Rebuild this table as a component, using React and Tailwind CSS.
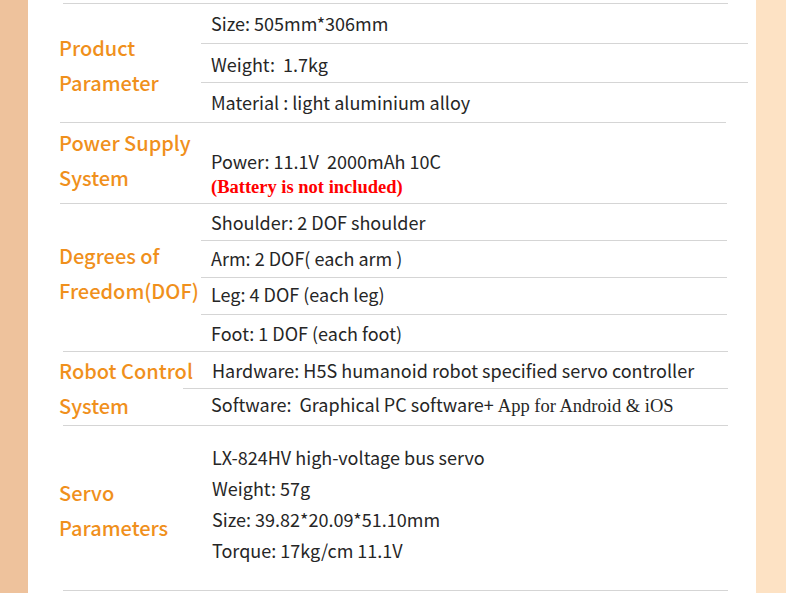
import React from "react";

const Line = ({ cls }) => <div className={"h-px bg-[#d5d5d5] " + cls} />;

const Label = ({ lines, cls = "" }) => (
  <div className={"w-[173px] shrink-0 pl-[31px] flex flex-col justify-center " + cls}>
    {lines.map((l) => (
      <div key={l} className="text-[20px] leading-[35px] font-medium text-[#f0901c] whitespace-nowrap">
        {l}
      </div>
    ))}
  </div>
);

export default function App() {
  return (
    <div
      className="flex w-[786px] h-[593px] overflow-hidden text-[#262626]"
      style={{ fontFamily: '"Noto Sans CJK SC", "Noto Sans", sans-serif' }}
    >
      <div className="w-[28px] shrink-0 bg-[#eec29c]" />
      <div className="w-[728px] shrink-0 bg-white flex flex-col">
        <div className="h-[3px]" />
        <Line cls="ml-[35px] w-[665px]" />

        {/* Product Parameter */}
        <div className="flex h-[118px]">
          <Label lines={["Product", "Parameter"]} cls="pt-[4px]" />
          <div className="flex flex-col w-[547px] text-[18px]">
            <div className="h-[40px] border-b border-[#d5d5d5] flex items-center pl-[10px]">Size: 505mm*306mm</div>
            <div className="h-[39px] border-b border-[#d5d5d5] flex items-center pl-[10px] pt-[2px] whitespace-pre">Weight:  1.7kg</div>
            <div className="h-[39px] flex items-center pl-[10px]">Material : light aluminium alloy</div>
          </div>
        </div>
        <Line cls="ml-[32px] w-[666px]" />

        {/* Power Supply */}
        <div className="flex h-[80px]">
          <Label lines={["Power Supply", "System"]} cls="pb-[6px]" />
          <div className="flex flex-col pt-[25px] pl-[10px]">
            <div className="text-[18px] leading-[26px] whitespace-pre">Power: 11.1V  2000mAh 10C</div>
            <div
              className="text-[18.5px] leading-[26px] font-bold text-[#ff0000]"
              style={{ fontFamily: '"Liberation Serif", serif' }}
            >
              (Battery is not included)
            </div>
          </div>
        </div>
        <Line cls="ml-[32px] w-[667px]" />

        {/* DOF */}
        <div className="flex h-[147px]">
          <Label lines={["Degrees of", "Freedom(DOF)"]} cls="pb-[10px]" />
          <div className="flex flex-col w-[526px] text-[18px]">
            <div className="h-[37px] border-b border-[#d5d5d5] flex items-center pl-[10px]">Shoulder: 2 DOF shoulder</div>
            <div className="h-[37px] border-b border-[#d5d5d5] flex items-center pl-[10px] pb-[2px]">Arm: 2 DOF( each arm )</div>
            <div className="h-[37px] border-b border-[#d5d5d5] flex items-center pl-[10px] pb-[4px]">Leg: 4 DOF (each leg)</div>
            <div className="h-[36px] flex items-center pl-[10px]">Foot: 1 DOF (each foot)</div>
          </div>
        </div>
        <Line cls="ml-[35px] w-[665px]" />

        {/* Robot Control */}
        <div className="flex h-[36px] items-center">
          <Label lines={["Robot Control"]} />
          <div className="text-[18px] pl-[11px] whitespace-nowrap">Hardware: H5S humanoid robot specified servo controller</div>
        </div>
        <Line cls="ml-[155px] w-[545px]" />
        <div className="flex h-[36px] items-center pb-[3px]">
          <Label lines={["System"]} />
          <div className="text-[18px] pl-[10px] whitespace-pre">
            Software:  Graphical PC software+{" "}
            <span className="text-[18.5px]" style={{ fontFamily: '"Liberation Serif", serif' }}>
              App for Android &amp; iOS
            </span>
          </div>
        </div>
        <Line cls="ml-[35px] w-[665px]" />

        {/* Servo */}
        <div className="flex h-[164px]">
          <Label lines={["Servo", "Parameters"]} cls="pt-[4px]" />
          <div className="flex flex-col pt-[16px] pl-[11px] text-[18px] leading-[31px]">
            <div>LX-824HV high-voltage bus servo</div>
            <div>Weight: 57g</div>
            <div>Size: 39.82*20.09*51.10mm</div>
            <div>Torque: 17kg/cm 11.1V</div>
          </div>
        </div>
        <Line cls="ml-[35px] w-[665px]" />
      </div>
      <div className="flex-1 bg-[#fde2c4]" />
    </div>
  );
}
